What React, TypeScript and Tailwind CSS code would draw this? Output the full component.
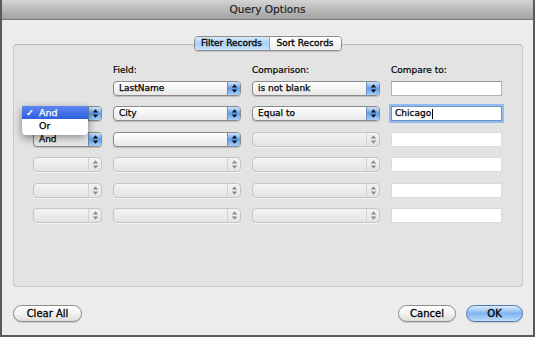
import React from "react";

function Arrows({ color }: { color: string }) {
  return (
    <svg width="7" height="11" viewBox="0 0 7 11">
      <path d="M3.5 1.2 L6.2 4.5 H0.8 Z" fill={color} />
      <path d="M3.5 9.8 L6.2 6.5 H0.8 Z" fill={color} />
    </svg>
  );
}

function Popup({ text, disabled }: { text?: string; disabled?: boolean }) {
  if (disabled) {
    return (
      <div className="flex h-[15px] rounded-[4px] border border-[#c4c4c4] bg-linear-to-b from-[#f3f3f3] to-[#e4e4e4] overflow-hidden shadow-[0_1px_0_rgba(255,255,255,0.6)]">
        <div className="flex-1" />
        <div className="w-[13px] flex items-center justify-center border-l border-[#d2d2d2]">
          <Arrows color="#8c8c8c" />
        </div>
      </div>
    );
  }
  return (
    <div className="flex h-[15px] rounded-[4px] border border-[#8a8a8a] bg-linear-to-b from-white to-[#e8e8e8] overflow-hidden shadow-[0_1px_1px_rgba(0,0,0,0.18)]">
      <div className="flex-1 pl-[5px] text-[9px] leading-[13px] text-black whitespace-nowrap [-webkit-text-stroke:0.25px_#000]">{text}</div>
      <div className="w-[13px] flex items-center justify-center bg-linear-to-b from-[#cfe4fb] via-[#5f9de9] to-[#a8d0f7] border-l border-[#6d8fbf]">
        <Arrows color="#101010" />
      </div>
    </div>
  );
}

function TextField({ light, children, focus }: { light?: boolean; children?: React.ReactNode; focus?: boolean }) {
  if (focus) {
    return (
      <div className="h-[15px] bg-white border border-[#6f93c6] ring-2 ring-[#93bbef] flex items-center pl-[3px] text-[9px] text-black [-webkit-text-stroke:0.25px_#000]">
        {children}
      </div>
    );
  }
  return (
    <div
      className={
        "h-[15px] bg-white border " +
        (light ? "border-[#dadada]" : "border-[#b4b4b4] border-t-[#969696]")
      }
    />
  );
}

function Button({ label, primary, w }: { label: string; primary?: boolean; w: string }) {
  return (
    <div
      className={
        "h-[17px] rounded-full border flex items-center justify-center text-[10px] text-black [-webkit-text-stroke:0.3px_#000] shadow-[0_1px_1px_rgba(0,0,0,0.15)] " +
        w +
        (primary
          ? " border-[#5579b0] bg-linear-to-b from-[#dcecfc] via-[#7fb5f0] to-[#bcdcfa]"
          : " border-[#8a8a8a] bg-linear-to-b from-white via-[#f2f2f2] to-[#dedede]")
      }
    >
      {label}
    </div>
  );
}

export default function App() {
  return (
    <div className="w-[535px] h-[337px] flex flex-col bg-[#ececec] border-x-2 border-b-2 border-[#5a5a5a] font-['DejaVu_Sans',sans-serif] overflow-hidden">
      {/* title bar */}
      <div className="h-[20px] shrink-0 flex items-center justify-center bg-linear-to-b from-[#d4d4d4] to-[#a2a2a2] border-b border-[#7b7b7b] text-[10.5px] text-[#1e1e1e] [-webkit-text-stroke:0.2px_#1e1e1e]">
        Query Options
      </div>

      {/* tabs */}
      <div className="mt-[16px] flex justify-center relative z-10">
        <div className="flex h-[15px] rounded-[4px] border border-[#8e8e8e] overflow-hidden text-[9px] leading-[13px] text-black [-webkit-text-stroke:0.3px_#000] shadow-[0_1px_1px_rgba(0,0,0,0.15)]">
          <div className="w-[75px] flex items-center justify-center bg-linear-to-b from-[#d9ebfc] via-[#a9d0f6] to-[#c8e3fb] border-r border-[#8aa4c8]">
            Filter Records
          </div>
          <div className="w-[71px] flex items-center justify-center bg-linear-to-b from-white to-[#ececec]">
            Sort Records
          </div>
        </div>
      </div>

      {/* panel */}
      <div className="ml-[11px] mr-[10px] -mt-[7px] h-[243px] rounded-[4px] border border-[#c9c9c9] border-t-[#b9b9b9] bg-[#e3e3e3] pl-[19px] pt-[19px]">
        <div className="grid grid-cols-[69px_128px_128px_111px] gap-x-[11px] text-[9px] leading-[12px] text-black [-webkit-text-stroke:0.2px_#000]">
          <div className="h-[12px]" />
          <div className="h-[12px]">Field:</div>
          <div className="h-[12px]">Comparison:</div>
          <div className="h-[12px]">Compare to:</div>
        </div>
        <div className="mt-[5px] grid grid-cols-[69px_128px_128px_111px] gap-x-[11px] gap-y-[10.4px]">
          {/* row 1 */}
          <div className="h-[15px]" />
          <Popup text="LastName" />
          <Popup text="is not blank" />
          <TextField />
          {/* row 2 */}
          <div className="relative">
            <Popup text="" />
            <div className="absolute left-[-11px] top-0 w-[66px] pb-[3px] bg-white rounded-b-[4px] shadow-[0_3px_9px_rgba(0,0,0,0.45)] z-20 text-[9.5px] [-webkit-text-stroke:0.25px_currentColor]">
              <div className="h-[13px] flex items-center bg-linear-to-b from-[#5d86ee] to-[#2f5ee0] text-white">
                <span className="w-[17px] pl-[4px]">✓</span>
                <span>And</span>
              </div>
              <div className="h-[13px] flex items-center text-black">
                <span className="w-[17px]" />
                <span>Or</span>
              </div>
            </div>
          </div>
          <Popup text="City" />
          <Popup text="Equal to" />
          <TextField focus>
            Chicago<span className="ml-[1px] inline-block w-[1px] h-[10px] bg-black" />
          </TextField>
          {/* row 3 */}
          <Popup text="And" />
          <Popup text="" />
          <Popup disabled />
          <TextField light />
          {/* rows 4-6 */}
          <Popup disabled />
          <Popup disabled />
          <Popup disabled />
          <TextField light />
          <Popup disabled />
          <Popup disabled />
          <Popup disabled />
          <TextField light />
          <Popup disabled />
          <Popup disabled />
          <Popup disabled />
          <TextField light />
        </div>
      </div>

      {/* buttons */}
      <div className="mt-[18px] ml-[11px] mr-[10px] flex items-center">
        <Button label="Clear All" w="w-[69px]" />
        <div className="flex-1" />
        <Button label="Cancel" w="w-[58px]" />
        <div className="w-[10px]" />
        <Button label="OK" primary w="w-[57px]" />
      </div>
    </div>
  );
}
